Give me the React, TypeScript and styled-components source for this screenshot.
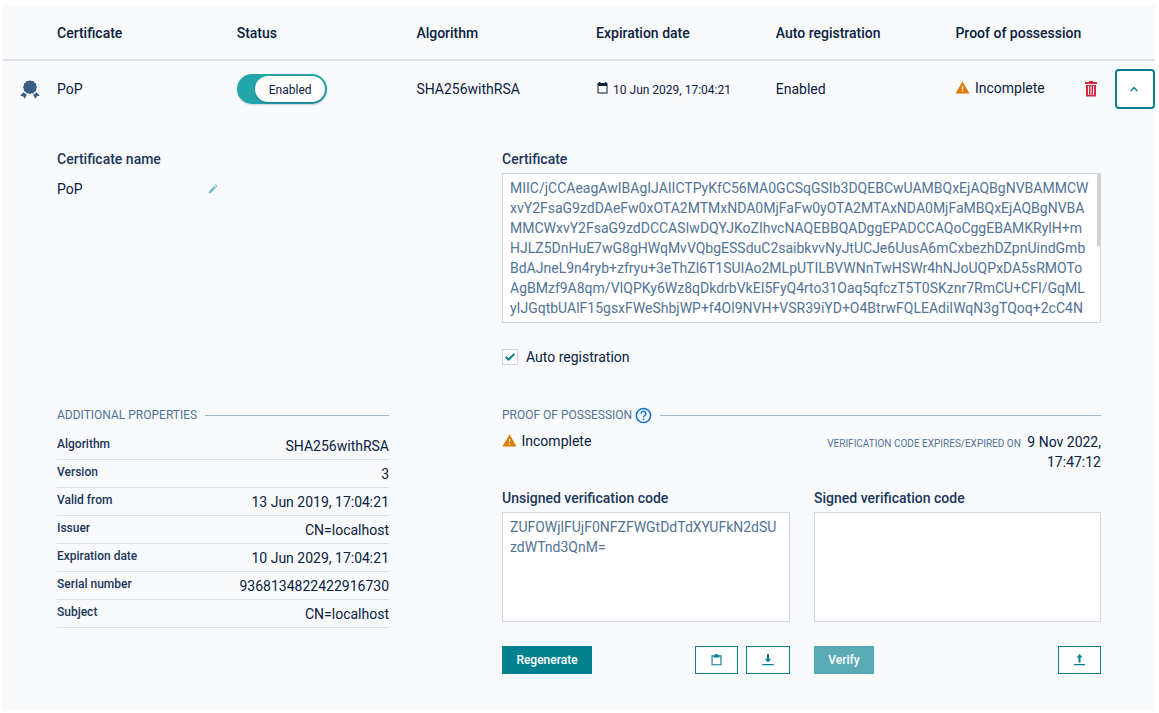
import React from "react";
import styled, { createGlobalStyle } from "styled-components";

const Global = createGlobalStyle`
  *, *::before, *::after { box-sizing: border-box; }
  body {
    margin: 0;
    background: #fff;
    color: #08213f;
    font: 400 14px/20px Roboto, sans-serif;
  }
  svg { display: block; flex: none; }
`;

const Panel = styled.main`
  width: 1152px;
  height: 705px;
  margin: 5px 0 0 3px;
  background: #f9fafc;
`;

const TableRow = styled.div`
  display: grid;
  grid-template-columns: 54px repeat(6, 179.7px);
  align-items: center;
  height: 56px;
`;

const TableHeader = styled(TableRow)`
  font-weight: 500;
  padding-top: 2px;
  border-bottom: 2px solid #e0e3eb;
`;

const IconCell = styled.div`
  padding: 1px 0 0 17px;
`;

const Toggle = styled.div`
  display: flex;
  justify-content: flex-end;
  width: 90px;
  height: 30px;
  padding: 2px;
  border-radius: 15px;
  background: #22a6aa;
  box-shadow: 0 1px 2px rgba(11, 37, 69, 0.2);
`;

const Knob = styled.span`
  width: 70px;
  height: 26px;
  padding-left: 1px;
  border-radius: 13px;
  background: #fff;
  font-size: 12px;
  line-height: 28px;
  text-align: center;
  box-shadow: 0 1px 2px rgba(11, 37, 69, 0.35);
`;

const DateCell = styled.div`
  display: flex;
  gap: 5px;
  padding: 2px 0 0 1px;
  font-size: 12px;
  svg { margin-top: 2px; }
`;

const StatusCell = styled.div`
  display: flex;
  align-items: center;
  justify-content: space-between;
  width: 199.5px;
`;

const Status = styled.div`
  display: flex;
  gap: 4.5px;
  padding-bottom: 2px;
  svg { margin-top: 3px; }
`;

const RowActions = styled.div`
  display: flex;
  align-items: center;
  gap: 18px;
`;

const ExpandButton = styled.button`
  display: grid;
  place-items: center;
  width: 40px;
  height: 40px;
  padding: 0 1px 0 0;
  border: 2px solid #05808f;
  border-radius: 4px;
  background: #fff;
`;

const Details = styled.div`
  display: grid;
  grid-template-columns: 332px 599px;
  column-gap: 113px;
  row-gap: 38px;
  padding: 32px 0 0 54px;
`;

const Label = styled.div`
  color: #1a365b;
  font-weight: 500;
`;

const NameLine = styled.div`
  display: flex;
  align-items: center;
  justify-content: space-between;
  width: 161px;
  margin-top: 10px;
`;

const TextBox = styled.div<{ $height: number }>`
  display: flex;
  justify-content: space-between;
  height: ${(p) => p.$height}px;
  margin-top: 4px;
  padding: 4px 0 0 7px;
  overflow: hidden;
  border: 1px solid #d0d7e0;
  background: #fff;
  color: #527396;
  white-space: pre;
`;

const ScrollThumb = styled.span`
  width: 4px;
  height: 73px;
  margin: -5px -1px 0 0;
  background: #ced4da;
`;

const CheckLine = styled.label`
  display: flex;
  align-items: center;
  gap: 8px;
  margin-top: 24px;
`;

const CheckBox = styled.span`
  display: grid;
  place-items: center;
  width: 16px;
  height: 16px;
  border: 1px solid #d0d7e0;
  background: #fff;
`;

const SectionTitle = styled.div`
  display: flex;
  align-items: center;
  height: 20px;
  color: #527396;
  font-size: 12px;
  &::after {
    content: "";
    flex: 1;
    height: 1px;
    margin: 1px 0 0 8px;
    background: #9fb8cc;
  }
  svg { margin: 1px 0 0 3px; }
`;

const Properties = styled.dl`
  margin: 7px 0 0;
`;

const Property = styled.div`
  display: flex;
  justify-content: space-between;
  height: 28px;
  border-bottom: 1px solid #dfe2e8;
  dt {
    color: #1a365b;
    font-size: 12px;
    font-weight: 500;
    line-height: 24px;
  }
  dd { margin: 0; line-height: 28px; }
`;

const ProofSummary = styled.div`
  display: flex;
  justify-content: space-between;
  height: 63px;
  padding-top: 6px;
`;

const Expiry = styled.div`
  width: 290px;
  padding-top: 1px;
  text-align: right;
  small {
    margin-right: 3px;
    color: #527396;
    font-size: 10px;
    line-height: 16px;
  }
`;

const Codes = styled.div`
  display: grid;
  grid-template-columns: 288px 287px;
  column-gap: 24px;
`;

const Actions = styled.div`
  display: flex;
  gap: 8px;
  margin-top: 24px;
  button:nth-child(2) { margin-left: auto; }
`;

const Button = styled.button<{ $width: number; $tone?: "faded" }>`
  width: ${(p) => p.$width}px;
  height: 28px;
  padding: 0;
  border: 0;
  background: ${(p) => (p.$tone === "faded" ? "#5aabb6" : "#05808f")};
  color: #fff;
  font: 500 12px/28px Roboto, sans-serif;
`;

const IconButton = styled(Button)`
  display: grid;
  place-items: center;
  border: 1px solid #05808f;
  background: #fff;
  color: #05808f;
`;

const Ribbon = () => (
  <svg width="20" height="20" viewBox="0 0 20 20" fill="#385d87">
    <path d="M10 .2 11.6 1.1 13.5 1 14.4 2.7 16.2 3.6 16.1 5.6 17 7.2 16.1 8.9 16.2 10.9 14.4 11.8 13.5 13.4 11.6 13.3 10 14.2 8.4 13.3 6.5 13.4 5.6 11.8 3.8 10.9 3.9 8.9 3 7.2 3.9 5.6 3.8 3.6 5.6 2.7 6.5 1 8.4 1.1Z" />
    <path d="M3.6 12.2 6.8 15.1 4.7 18.7 3.3 16.6.2 15.4ZM16.4 12.2 13.2 15.1 15.3 18.7 16.7 16.6 19.8 15.4Z" />
  </svg>
);

const Warning = () => (
  <svg width="15" height="13" viewBox="0 0 15 13">
    <path d="M7.5.5 14.5 12.5H.5Z" fill="#e07b00" />
    <path d="M6.8 5h1.4v3.2H6.8zM6.8 9.3h1.4v1.4H6.8z" fill="#f9fafc" />
  </svg>
);

const Calendar = () => (
  <svg width="11" height="12" viewBox="0 0 11 12" fill="#08213f">
    <path d="M2 0h1.4v1H8V0h1.4v1H10.5v10.5H.5V1H2zM1.5 4v6.5h8V4z" fillRule="evenodd" />
  </svg>
);

const Trash = () => (
  <svg width="12" height="16" viewBox="0 0 12 16" fill="#d3293d">
    <path d="M4 0h4v1h4v2H0V1h4zM1 4h10v11.5H1zM3 5v9h1V5zM5.5 5v9h1V5zM8 5v9h1V5z" fillRule="evenodd" />
  </svg>
);

const Pencil = () => (
  <svg width="10" height="10" viewBox="0 0 11 11" fill="#7dbfc7">
    <path d="M.5 10.5 1.2 7.6 6.7 2.2 8.8 4.3 3.4 9.8ZM7.4 1.5 8.4.5H8.9L10.5 2.1V2.6L9.5 3.6Z" />
  </svg>
);

const Chevron = () => (
  <svg width="8" height="6" viewBox="0 0 8 6" fill="none" stroke="#05808f" strokeWidth="1.4">
    <path d="M.6 4.9 4 1.5 7.4 4.9" />
  </svg>
);

const Check = () => (
  <svg width="10" height="8" viewBox="0 0 10 8" fill="none" stroke="#05808f" strokeWidth="2">
    <path d="M.7 3.8 3.6 6.5 9.3.9" />
  </svg>
);

const Help = () => (
  <svg width="17" height="17" viewBox="0 0 17 17" fill="none" stroke="#0b6fd0">
    <circle cx="8.5" cy="8.5" r="7.1" strokeWidth="1.5" />
    <path d="M6.1 6.7a2.4 2.3 0 1 1 3.7 1.8C8.9 9.1 8.5 9.4 8.5 10.5" strokeWidth="1.4" />
    <path d="M8.5 11.5v1.6" strokeWidth="1.6" />
  </svg>
);

const Clipboard = () => (
  <svg width="11" height="12" viewBox="0 0 11 12" fill="currentColor">
    <path d="M.5 1.2H3.6Q4 0 5.5 0T7.4 1.2H10.5V11.3H.5ZM1.6 2.5V10.3H9.4V2.5H8.3V3.6H2.7V2.5Z" fillRule="evenodd" />
  </svg>
);

const Download = () => (
  <svg width="12" height="12" viewBox="0 0 12 12" fill="currentColor">
    <path d="M5 0h2v4.8h2.3L6 8.5 2.7 4.8H5zM.3 10h11.4v1.2H.3z" />
  </svg>
);

const Upload = () => (
  <svg width="12" height="12" viewBox="0 0 12 12" fill="currentColor">
    <path d="M5.5 0 8.5 3.5H6.5V8.5H4.5V3.5H2.5zM0 10h11v1.2H0z" />
  </svg>
);

const certificate = [
  "MIIC/jCCAeagAwIBAgIJAIICTPyKfC56MA0GCSqGSIb3DQEBCwUAMBQxEjAQBgNVBAMMCW",
  "xvY2FsaG9zdDAeFw0xOTA2MTMxNDA0MjFaFw0yOTA2MTAxNDA0MjFaMBQxEjAQBgNVBA",
  "MMCWxvY2FsaG9zdDCCASIwDQYJKoZIhvcNAQEBBQADggEPADCCAQoCggEBAMKRylH+m",
  "HJLZ5DnHuE7wG8gHWqMvVQbgESSduC2saibkvvNyJtUCJe6UusA6mCxbezhDZpnUindGmb",
  "BdAJneL9n4ryb+zfryu+3eThZl6T1SUIAo2MLpUTILBVWNnTwHSWr4hNJoUQPxDA5sRMOTo",
  "AgBMzf9A8qm/VIQPKy6Wz8qDkdrbVkEI5FyQ4rto31Oaq5qfczT5T0SKznr7RmCU+CFI/GqML",
  "yIJGqtbUAlF15gsxFWeShbjWP+f4Ol9NVH+VSR39iYD+O4BtrwFQLEAdiIWqN3gTQoq+2cC4N",
].join("\n");

const properties = [
  ["Algorithm", "SHA256withRSA"],
  ["Version", "3"],
  ["Valid from", "13 Jun 2019, 17:04:21"],
  ["Issuer", "CN=localhost"],
  ["Expiration date", "10 Jun 2029, 17:04:21"],
  ["Serial number", "9368134822422916730"],
  ["Subject", "CN=localhost"],
];

const columns = ["Certificate", "Status", "Algorithm", "Expiration date", "Auto registration", "Proof of possession"];

export default function App() {
  return (
    <>
      <Global />
      <Panel>
        <TableHeader>
          <span />
          {columns.map((c) => <span key={c}>{c}</span>)}
        </TableHeader>
        <TableRow>
          <IconCell><Ribbon /></IconCell>
          <span>PoP</span>
          <Toggle><Knob>Enabled</Knob></Toggle>
          <span>SHA256withRSA</span>
          <DateCell><Calendar />10 Jun 2029, 17:04:21</DateCell>
          <span>Enabled</span>
          <StatusCell>
            <Status><Warning />Incomplete</Status>
            <RowActions>
              <Trash />
              <ExpandButton aria-label="Collapse"><Chevron /></ExpandButton>
            </RowActions>
          </StatusCell>
        </TableRow>
        <Details>
          <section>
            <Label>Certificate name</Label>
            <NameLine>PoP<Pencil /></NameLine>
          </section>
          <section>
            <Label>Certificate</Label>
            <TextBox $height={150}>{certificate}<ScrollThumb /></TextBox>
            <CheckLine><CheckBox><Check /></CheckBox>Auto registration</CheckLine>
          </section>
          <section>
            <SectionTitle>ADDITIONAL PROPERTIES</SectionTitle>
            <Properties>
              {properties.map(([name, value]) => (
                <Property key={name}><dt>{name}</dt><dd>{value}</dd></Property>
              ))}
            </Properties>
          </section>
          <section>
            <SectionTitle>PROOF OF POSSESSION<Help /></SectionTitle>
            <ProofSummary>
              <Status><Warning />Incomplete</Status>
              <Expiry><small>VERIFICATION CODE EXPIRES/EXPIRED ON</small> 9 Nov 2022, 17:47:12</Expiry>
            </ProofSummary>
            <Codes>
              <div>
                <Label>Unsigned verification code</Label>
                <TextBox $height={110}>{"ZUFOWjlFUjF0NFZFWGtDdTdXYUFkN2dSU\nzdWTnd3QnM="}</TextBox>
                <Actions>
                  <Button $width={90}>Regenerate</Button>
                  <IconButton $width={43} aria-label="Copy"><Clipboard /></IconButton>
                  <IconButton $width={44} aria-label="Download"><Download /></IconButton>
                </Actions>
              </div>
              <div>
                <Label>Signed verification code</Label>
                <TextBox $height={110} />
                <Actions>
                  <Button $width={60} $tone="faded">Verify</Button>
                  <IconButton $width={43} aria-label="Upload"><Upload /></IconButton>
                </Actions>
              </div>
            </Codes>
          </section>
        </Details>
      </Panel>
    </>
  );
}
